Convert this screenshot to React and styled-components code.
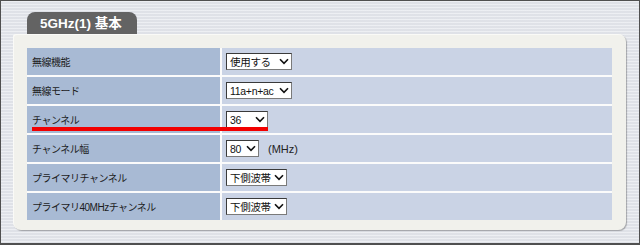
import React from "react";
import styled, { createGlobalStyle } from "styled-components";

const GlobalStyle = createGlobalStyle`
  html, body {
    margin: 0;
    padding: 0;
  }
  body {
    font-family: "Noto Sans CJK JP", "Liberation Sans", sans-serif;
  }
`;

const Screen = styled.div`
  box-sizing: border-box;
  width: 640px;
  height: 245px;
  border: 1px solid #505050;
  border-bottom-width: 2px;
  padding: 11px 12px 0 12px;
  background-color: #e3e6ec;
  background-image: repeating-linear-gradient(
    180deg,
    rgba(255, 255, 255, 0.35) 0px,
    rgba(255, 255, 255, 0.35) 1px,
    rgba(0, 0, 0, 0.02) 1px,
    rgba(0, 0, 0, 0.02) 3px
  );
`;

const Tab = styled.div`
  margin-left: 14px;
  width: 110px;
  height: 22px;
  box-sizing: border-box;
  background: #636363;
  border-radius: 8px 8px 0 0;
  color: #fff;
  font-family: "Liberation Sans", "Noto Sans CJK JP", sans-serif;
  font-weight: bold;
  font-size: 13.5px;
  line-height: 23px;
  padding-left: 13px;
  white-space: nowrap;
`;

const Panel = styled.div`
  width: 613px;
  height: 196px;
  box-sizing: border-box;
  padding: 14px 14px 0 14px;
  background: #f1f1ec;
  border-radius: 8px;
  border-top-left-radius: 3px;
  box-shadow: 1px 1px 1px rgba(0, 0, 0, 0.28), inset 1px 1px 0 #fafaf7;
`;

const Table = styled.div`
  position: relative;
  display: grid;
  grid-template-columns: 193px 1fr;
  grid-auto-rows: 27px;
  gap: 2px;
  background: #fbfbfb;
`;

const Label = styled.div`
  background: #a8bad4;
  color: #1c1c1c;
  font-family: "Liberation Sans", "Noto Sans CJK JP", sans-serif;
  font-size: 10px;
  letter-spacing: -0.5px;
  display: flex;
  align-items: center;
  padding-left: 5px;
`;

const Value = styled.div`
  background: #cad3e5;
  display: flex;
  align-items: center;
  padding-left: 4px;
  gap: 9px;
`;

const SelectBox = styled.div`
  box-sizing: border-box;
  width: ${(p) => p.$w}px;
  height: 17px;
  background: #fff;
  border: 1px solid #3a3a3a;
  border-right-color: #7a7a7a;
  border-bottom-color: #7a7a7a;
  display: flex;
  align-items: center;
  justify-content: space-between;
  padding: 0 2px 0 3px;
  font-size: 10.5px;
  letter-spacing: -0.3px;
  color: #111;
  white-space: nowrap;
  overflow: hidden;
  font-family: "Liberation Sans", "Noto Sans CJK JP", sans-serif;

  svg {
    flex-shrink: 0;
  }
`;

const Unit = styled.span`
  font-size: 11px;
  color: #222;
  font-family: "Liberation Sans", sans-serif;
`;

const Marker = styled.div`
  position: absolute;
  left: 5px;
  top: 79px;
  width: 236px;
  height: 4px;
  background: #f20000;
`;

function Chevron() {
  return (
    <svg width="10" height="7" viewBox="0 0 10 7">
      <path d="M1 1.2 L5 5.4 L9 1.2" fill="none" stroke="#111" strokeWidth="1.6" />
    </svg>
  );
}

function Select({ value, width }) {
  return (
    <SelectBox $w={width}>
      <span>{value}</span>
      <Chevron />
    </SelectBox>
  );
}

const rows = [
  { label: "無線機能", value: "使用する", width: 66 },
  { label: "無線モード", value: "11a+n+ac", width: 66 },
  { label: "チャンネル", value: "36", width: 42 },
  { label: "チャンネル幅", value: "80", width: 33, unit: "(MHz)" },
  { label: "プライマリチャンネル", value: "下側波帯", width: 61 },
  { label: "プライマリ40MHzチャンネル", value: "下側波帯", width: 61 },
];

export default function App() {
  return (
    <>
      <GlobalStyle />
      <Screen>
        <Tab>5GHz(1) 基本</Tab>
        <Panel>
          <Table>
            {rows.map((r) => (
              <React.Fragment key={r.label}>
                <Label>{r.label}</Label>
                <Value>
                  <Select value={r.value} width={r.width} />
                  {r.unit && <Unit>{r.unit}</Unit>}
                </Value>
              </React.Fragment>
            ))}
            <Marker />
          </Table>
        </Panel>
      </Screen>
    </>
  );
}
